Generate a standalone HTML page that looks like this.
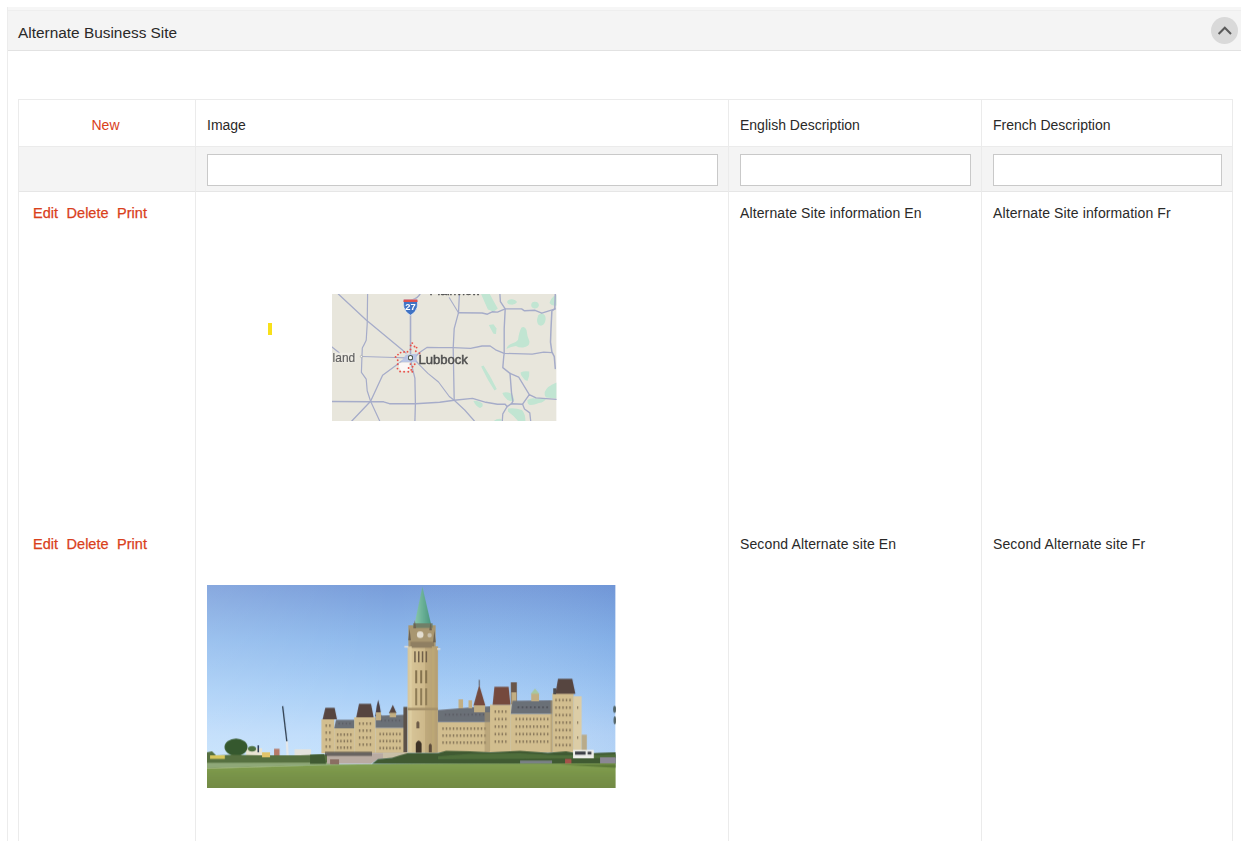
<!DOCTYPE html>
<html lang="en">
<head>
<meta charset="utf-8">
<title>Alternate Business Site</title>
<style>
html,body{margin:0;padding:0;background:#fff;}
body{width:1246px;height:847px;overflow:hidden;position:relative;font-family:"Liberation Sans",Arial,sans-serif;font-size:14px;color:#2a2928;}
.panel{position:absolute;left:7px;top:7px;width:1234px;height:834px;box-sizing:border-box;border-left:1px solid #ececec;overflow:hidden;}
.panel-top{position:absolute;left:0;top:0;width:1234px;height:3px;background:#f6f6f6;border-bottom:1px solid #eeeeee;}
.panel-head{position:absolute;left:-1px;top:4px;width:1235px;height:39px;background:#f4f4f4;border-bottom:1px solid #e2e2e2;}
.panel-title{position:absolute;left:11px;top:13px;font-size:15.4px;line-height:18px;color:#2a2928;white-space:nowrap;}
.collapse{position:absolute;left:1204px;top:5.5px;width:27px;height:27px;border-radius:50%;background:#d9d9d9;}
.collapse svg{position:absolute;left:0;top:0;}
table.grid{position:absolute;left:10px;top:92px;width:1215px;border-collapse:separate;border-spacing:0;table-layout:fixed;border-top:1px solid #ebebeb;border-left:1px solid #ebebeb;}
table.grid td,table.grid th{border-right:1px solid #ebebeb;box-sizing:border-box;padding:0 10px 0 11px;text-align:left;vertical-align:top;font-weight:normal;overflow:hidden;white-space:nowrap;}
table.grid th{height:47px;border-bottom:1px solid #ebebeb;padding-top:17px;line-height:16px;}
table.grid tr.filter td{height:45px;background:#f4f4f4;border-bottom:1px solid #e6e6e6;padding-top:7px;}
table.grid tr.filter input{display:block;width:100%;height:32px;box-sizing:border-box;border:1px solid #c9c9c9;background:#fff;margin:0;padding:0 6px;font:inherit;border-radius:0;outline:none;}
table.grid tr.data td{height:331px;padding-top:13px;line-height:16px;position:relative;}
a.cmd{color:#d9401c;text-decoration:none;}
td.cmds a.cmd{font-size:14.5px;-webkit-text-stroke:0.25px #d9401c;}
table.grid tr.data td.txt{letter-spacing:0.12px;}
.ymark{position:absolute;left:71.5px;top:130.9px;width:4.6px;height:12.3px;background:#f8e01a;filter:blur(0.5px);}
a.cmd + a.cmd{margin-left:8.6px;}
th.cmdh{text-align:center !important;padding-right:14px !important;}
.pic{position:absolute;display:block;}
</style>
</head>
<body>
<div class="panel">
  <div class="panel-top"></div>
  <div class="panel-head">
    <span class="panel-title">Alternate Business Site</span>
    <div class="collapse"><svg width="27" height="27" viewBox="0 0 27 27"><path d="M7.6 17 L13.8 10.7 L20 17" fill="none" stroke="#5a5a5a" stroke-width="2"/></svg></div>
  </div>
  <table class="grid">
    <colgroup><col style="width:177px"><col style="width:533px"><col style="width:253px"><col style="width:251px"></colgroup>
    <thead>
      <tr>
        <th class="cmdh"><a class="cmd" href="#">New</a></th>
        <th>Image</th>
        <th>English Description</th>
        <th>French Description</th>
      </tr>
    </thead>
    <tbody>
      <tr class="filter">
        <td></td>
        <td><input type="text" value=""></td>
        <td><input type="text" value=""></td>
        <td><input type="text" value=""></td>
      </tr>
      <tr class="data">
        <td class="cmds" style="padding-left:14px"><a class="cmd" href="#">Edit</a><a class="cmd" href="#">Delete</a><a class="cmd" href="#">Print</a></td>
        <td><span class="ymark"></span><svg class="pic" style="left:136.3px;top:101.9px" width="224.6" height="127" viewBox="0 0 224.6 127">
<defs><clipPath id="mclip"><rect x="0" y="0" width="224.6" height="127"/></clipPath><filter id="mblur" x="-5%" y="-5%" width="110%" height="110%"><feGaussianBlur stdDeviation="0.65"/></filter></defs>
<g clip-path="url(#mclip)">
<rect x="0" y="0" width="224.6" height="127" fill="#e8e6dc"/>
<g filter="url(#mblur)">
<path d="M149.1 0 L157.8 0 L161 6 L165.8 14.4 L161.7 17.8 L155.9 15.4 L152 6.7 Z" fill="#c1e5d2"/>
<path d="M175.1 8 Q176 5 180 5.3 Q185 6 184.8 8.5 Q183 11 179 10.6 Q175.5 10.5 175.1 8 Z" fill="#c1e5d2"/>
<path d="M199.2 11 Q199.5 7.5 203 7.7 Q207 8 206.9 11.5 Q206 14.6 202.5 14.4 Q199 14 199.2 11 Z" fill="#c1e5d2"/>
<path d="M217.5 9 Q219 3 224.6 1 L224.6 11.5 Q220 12.5 217.5 9 Z" fill="#c1e5d2"/>
<path d="M205 26 Q205.5 20 209.5 19.2 Q213.7 20 213.7 25 Q213 31 209 31.7 Q205 31.5 205 26 Z" fill="#c1e5d2"/>
<path d="M156.8 31 L161.5 30.3 L164.5 34.5 L164 40 L161.5 39.8 L158.8 35 Z" fill="#c1e5d2"/>
<path d="M186 46 Q187 38 189.5 33.5 Q193 32 194.5 36 Q195 42 197.5 47.5 Q197.5 52 193 53 Q188 54.5 184 52 Q179 52.5 174.5 55 Q175 51 180 49.5 Q184 48.5 186 46 Z" fill="#c1e5d2"/>
<path d="M149.1 72.5 L151.5 71.5 L158 82 L164.8 95 L162.5 96.6 L156 86 Z" fill="#c1e5d2"/>
<path d="M188.6 78.5 Q192 76.5 197.3 77.5 Q197.8 82 195.5 87 Q192 86 190.5 83 Q188.5 81 188.6 78.5 Z" fill="#c1e5d2"/>
<path d="M170.3 99 Q174 97.5 179 99.5 Q183 103 182 107 Q178 108 175 105.5 Q171.5 102.5 170.3 99 Z" fill="#c1e5d2"/>
<path d="M141.4 107 Q146 106 150.5 109.5 Q151.5 113 148 114 Q144 112.5 141.4 107 Z" fill="#c1e5d2"/>
<path d="M212.7 98 Q215 92 224.6 88.5 L224.6 104.5 Q218 104 214 103.5 Q212 101 212.7 98 Z" fill="#c1e5d2"/>
<path d="M195.4 106 Q199 103.5 204 104.5 L214 104.2 Q213 108 207 109 Q201 111.5 197 110.8 Q195 109 195.4 106 Z" fill="#c1e5d2"/>
<path d="M176 114.5 Q183 113.5 190 116 Q193.5 120 193.4 127 L186 127 Q181 121 176 117.5 Z" fill="#c1e5d2"/>
<path d="M161.7 127 Q165 124.3 169.4 125 L169.4 127 Z" fill="#c1e5d2"/>
<path d="M6.3 0 L34.2 26 L74 59" fill="none" stroke="#a6acc9" stroke-width="1.3" stroke-linejoin="round" stroke-linecap="round"/>
<path d="M35.6 0 L35.2 30 L34.2 46.2 Q32 51 30.3 54 L29.9 64 L29.4 78.4 L34.2 85.1 L35.2 96.7 L38.6 107.3 L47.7 127" fill="none" stroke="#a6acc9" stroke-width="1.2" stroke-linejoin="round" stroke-linecap="round"/>
<path d="M0 53 L7.2 58.8" fill="none" stroke="#a6acc9" stroke-width="1.2" stroke-linejoin="round" stroke-linecap="round"/>
<path d="M88 0 Q86 4 80 6 L78.5 10 L78.5 60" fill="none" stroke="#a6acc9" stroke-width="1.6" stroke-linejoin="round" stroke-linecap="round"/>
<path d="M84 62 L87.2 58.8 L94.9 53.5 L107.7 53.6 L121.2 53.6 L138.5 54.4 L150.1 52 L157.8 51.8 L163.6 55.8 L172.2 59.4 L200.2 60.2 L211.7 58.2 L219.9 58.7" fill="none" stroke="#a6acc9" stroke-width="1.3" stroke-linejoin="round" stroke-linecap="round"/>
<path d="M29.9 62.5 L63.1 63.5 L74 63.8" fill="none" stroke="#a6acc9" stroke-width="1.2" stroke-linejoin="round" stroke-linecap="round"/>
<path d="M70 67 L50.6 81.3 L38.6 107.3 L19.8 127" fill="none" stroke="#a6acc9" stroke-width="1.3" stroke-linejoin="round" stroke-linecap="round"/>
<path d="M0 107.5 L38.6 107.8 L51.6 107.8 L57.4 109.7 L83.4 109.7 L107.7 108.3 L122.2 106.3 L140.5 104.4 L153.9 108.3 L165.5 110.2 L173.2 110.2 L175.1 112.6 L179.5 109.7 L190.6 110.2 L197.3 100.6 L204 103.9 L224.6 105.4" fill="none" stroke="#a6acc9" stroke-width="1.4" stroke-linejoin="round" stroke-linecap="round"/>
<path d="M79 66 L79.5 70.7 L82.9 84.2 L83.4 109.7 L82.9 127" fill="none" stroke="#a6acc9" stroke-width="1.3" stroke-linejoin="round" stroke-linecap="round"/>
<path d="M84 67 L87.2 70.7 L95.9 79.4 L106.5 88 L117.3 102.5 L122.2 106.3 L132.7 116 L142.4 127" fill="none" stroke="#a6acc9" stroke-width="1.2" stroke-linejoin="round" stroke-linecap="round"/>
<path d="M127.4 0 L126.5 18.7 L122.2 34.6 L121.2 53.9 L121.7 80 L122.2 106.3" fill="none" stroke="#a6acc9" stroke-width="1.3" stroke-linejoin="round" stroke-linecap="round"/>
<path d="M117.3 3.8 L126.5 18.7" fill="none" stroke="#a6acc9" stroke-width="1.1" stroke-linejoin="round" stroke-linecap="round"/>
<path d="M126.5 18.7 L150.1 19 L155.4 20.2 L160.2 17.8 L165.5 18.1 L173.2 14.9 L189.6 14.9 L192.5 16.8 L203.1 16.3 L209.8 19.2 L223.3 14.9" fill="none" stroke="#a6acc9" stroke-width="1.4" stroke-linejoin="round" stroke-linecap="round"/>
<path d="M167.9 0 L168.4 7.7 L173.2 14.9 L172.2 34.6 L172.2 59.7 L171.8 62 L170.8 73.6 L178 79.4 L179.5 98.6 L180.9 107.3 L179.5 109.7" fill="none" stroke="#a6acc9" stroke-width="1.4" stroke-linejoin="round" stroke-linecap="round"/>
<path d="M178 79.4 L186.7 83.2 L197.3 100.6" fill="none" stroke="#a6acc9" stroke-width="1.3" stroke-linejoin="round" stroke-linecap="round"/>
<path d="M175.1 112.6 L170.8 119.8 L170.3 127" fill="none" stroke="#a6acc9" stroke-width="1.3" stroke-linejoin="round" stroke-linecap="round"/>
<path d="M190.6 110.2 L192.5 115 L197.8 118.9 L198.7 127" fill="none" stroke="#a6acc9" stroke-width="1.3" stroke-linejoin="round" stroke-linecap="round"/>
<path d="M223.3 0 L222.8 14.9 L219.9 16.8 L219 34.6 L218.5 48.1 L219.9 57.8 L222.3 62.6 L223.3 74.6" fill="none" stroke="#a6acc9" stroke-width="1.5" stroke-linejoin="round" stroke-linecap="round"/>
<path d="M68.6 68.2 L73.9 60.8 L84.6 59.7 L84.6 68.2 Z" fill="#b3bfe6" opacity="0.85"/>
<path d="M67.2 68.7 L77.6 68.7 L77.4 76.8 L69 77 L67 73 Z" fill="#fbf7f6"/>
</g>
<g fill="#ea5149" filter="url(#mblur)"><circle cx="80.3" cy="49.1" r="0.95"/><circle cx="78.7" cy="51.5" r="0.95"/><circle cx="82.5" cy="52.5" r="0.95"/><circle cx="84.6" cy="53.6" r="0.95"/><circle cx="78.5" cy="55.4" r="0.95"/><circle cx="83.8" cy="57.3" r="0.95"/><circle cx="87.5" cy="59.2" r="0.95"/><circle cx="75.5" cy="57.8" r="0.95"/><circle cx="72.1" cy="58.0" r="0.95"/><circle cx="68.6" cy="58.6" r="0.95"/><circle cx="66.0" cy="60.6" r="0.95"/><circle cx="63.6" cy="62.9" r="0.95"/><circle cx="65.7" cy="66.3" r="0.95"/><circle cx="65.7" cy="70.3" r="0.95"/><circle cx="65.5" cy="74.6" r="0.95"/><circle cx="68.1" cy="77.5" r="0.95"/><circle cx="72.1" cy="77.8" r="0.95"/><circle cx="76.3" cy="77.8" r="0.95"/><circle cx="80.3" cy="77.8" r="0.95"/><circle cx="76.6" cy="74.0" r="0.95"/><circle cx="78.5" cy="70.1" r="0.95"/><circle cx="82.7" cy="70.3" r="0.95"/><circle cx="79.3" cy="75.9" r="0.95"/><circle cx="80.6" cy="72.8" r="0.95"/></g>
<circle cx="78.5" cy="63.7" r="2.2" fill="#fff" stroke="#4f5a50" stroke-width="1.2" filter="url(#mblur)"/>
<circle cx="29.4" cy="62.5" r="1.1" fill="#f4f4f0" stroke="#999" stroke-width="0.5"/>
<g filter="url(#mblur)">
<path d="M71.6 5.4 L85.4 5.4 L85.6 8 Q86 14 83 17.5 Q81 20 78.5 21.2 Q76 20 74 17.5 Q71 14 71.4 8 Z" fill="#3f73c4" stroke="#fff" stroke-width="0.6"/>
<path d="M71.6 5.4 L85.4 5.4 L85.55 7.9 L71.45 7.9 Z" fill="#e0514c"/>
</g>
<text x="78.5" y="16.3" text-anchor="middle" filter="url(#mblur)" font-family="Liberation Sans, Arial, sans-serif" font-weight="bold" font-size="8.4" fill="#fff" textLength="10.4" lengthAdjust="spacingAndGlyphs">27</text>
<g filter="url(#mblur)" font-family="Liberation Sans, Arial, sans-serif">
<text x="86.4" y="69.8" font-size="12.6" fill="#505050" stroke="#505050" stroke-width="0.45" textLength="49.5" lengthAdjust="spacingAndGlyphs">Lubbock</text>
<rect x="0" y="58.6" width="24" height="10" fill="#efede6" opacity="0.7"/><text x="0.6" y="67.6" font-size="12" fill="#606060" stroke="#606060" stroke-width="0.15" textLength="22.6" lengthAdjust="spacingAndGlyphs">land</text>
<text x="97.5" y="1.0" font-size="12.6" fill="#505050" stroke="#505050" stroke-width="0.45" textLength="51" lengthAdjust="spacingAndGlyphs">Plainview</text>
</g>
</g></svg></td>
        <td class="txt">Alternate Site information En</td>
        <td class="txt">Alternate Site information Fr</td>
      </tr>
      <tr class="data">
        <td class="cmds" style="padding-left:14px"><a class="cmd" href="#">Edit</a><a class="cmd" href="#">Delete</a><a class="cmd" href="#">Print</a></td>
        <td><svg class="pic" style="left:11px;top:61.7px" width="408.6" height="203.1" viewBox="207.0 584.7 408.6 203.1">
<defs><linearGradient id="sky" x1="0" y1="0" x2="0" y2="1"><stop offset="0" stop-color="#789dda"/><stop offset="0.3" stop-color="#8eb9ec"/><stop offset="0.58" stop-color="#a6cdf6"/><stop offset="0.83" stop-color="#bedcfb"/><stop offset="1" stop-color="#c5e2fc"/></linearGradient><linearGradient id="skyh" x1="0" y1="0" x2="1" y2="0"><stop offset="0" stop-color="#fff" stop-opacity="0.12"/><stop offset="0.45" stop-color="#fff" stop-opacity="0"/><stop offset="1" stop-color="#2858b8" stop-opacity="0.10"/></linearGradient><linearGradient id="lawn" x1="0" y1="0" x2="0" y2="1"><stop offset="0" stop-color="#82a052"/><stop offset="0.4" stop-color="#7a9549"/><stop offset="1" stop-color="#728a44"/></linearGradient><linearGradient id="spire" x1="0" y1="0" x2="1" y2="0"><stop offset="0" stop-color="#8cc9ae"/><stop offset="0.5" stop-color="#69b096"/><stop offset="1" stop-color="#4a957c"/></linearGradient><linearGradient id="shaft" x1="0" y1="0" x2="1" y2="0"><stop offset="0" stop-color="#d9c79a"/><stop offset="0.6" stop-color="#cdb88a"/><stop offset="1" stop-color="#b9a377"/></linearGradient><clipPath id="pclip"><rect x="207.0" y="584.7" width="408.6" height="203.1"/></clipPath><filter id="pblur" x="-2%" y="-2%" width="104%" height="104%"><feGaussianBlur stdDeviation="0.5"/></filter></defs>
<g clip-path="url(#pclip)">
<rect x="207.0" y="584.7" width="408.6" height="181.3" fill="url(#sky)"/>
<rect x="207.0" y="584.7" width="408.6" height="181.3" fill="url(#skyh)"/>
<g filter="url(#pblur)">
<rect x="294.5" y="749.0" width="16.5" height="6.0" fill="#e4e3dc"/>
<rect x="274.0" y="748.5" width="5.5" height="7.0" fill="#b57a68"/>
<rect x="246.0" y="748.0" width="16.0" height="8.0" fill="#e9e4d4"/>
<ellipse cx="236" cy="746.8" rx="11.5" ry="8.6" fill="#36592e"/>
<ellipse cx="252" cy="748.5" rx="4" ry="2.8" fill="#4d7040"/>
<line x1="282.6" y1="705.9" x2="286.8" y2="741" stroke="#2f3e4e" stroke-width="1.3"/>
<line x1="286.8" y1="741" x2="287.5" y2="755" stroke="#e4e6e8" stroke-width="2.2"/>
<rect x="257.5" y="745.0" width="1.5" height="7.0" fill="#2a3a55"/>
<polygon points="207.0,752.0 212.0,751.0 216.0,755.0 232.0,754.5 260.0,755.0 300.0,755.0 330.0,754.0 330.0,764.0 207.0,764.0" fill="#56703f"/>
<rect x="210.0" y="755.0" width="14.8" height="3.6" fill="#d8c65c"/>
<rect x="262.0" y="752.0" width="8.0" height="5.0" fill="#e2c46a"/>
<polygon points="207.0,762.5 330.0,762.2 330.0,764.5 207.0,768.2" fill="#8fa878"/>
<rect x="321.4" y="719.0" width="12.8" height="34.0" fill="#d2be8f"/>
<polygon points="322.6,719.0 325.3,707.4 334.6,707.4 337.0,719.0" fill="#574541"/>
<rect x="334.2" y="728.0" width="20.0" height="25.0" fill="#d2be8f"/>
<polygon points="334.2,728.0 336.0,719.5 354.2,719.5 354.2,728.0" fill="#6b6f77"/>
<rect x="354.2" y="717.0" width="21.4" height="36.0" fill="#d2be8f"/>
<polygon points="356.2,717.0 359.0,703.4 371.0,703.4 373.6,717.0" fill="#574541"/>
<rect x="375.6" y="727.4" width="31.4" height="25.6" fill="#d2be8f"/>
<polygon points="375.6,727.4 375.6,715.4 404.0,714.6 404.0,727.4" fill="#6b6f77"/>
<polygon points="375.2,716.0 376.6,706.0 378.2,699.4 379.8,706.0 381.4,716.0" fill="#4b4044"/>
<rect x="376.0" y="712.0" width="5.0" height="8.0" fill="#c2ae82"/>
<polygon points="388.8,713.0 392.8,704.6 396.6,713.0" fill="#574541"/>
<rect x="389.6" y="712.5" width="6.4" height="4.5" fill="#c2ae82"/>
<rect x="403.4" y="706.6" width="4.0" height="45.4" fill="#5b5148"/>
<g fill="#7a6a50" opacity="0.85"><rect x="325.5" y="724.0" width="1.4" height="2.6"/><rect x="329.1" y="724.0" width="1.4" height="2.6"/><rect x="325.5" y="731.0" width="1.4" height="2.6"/><rect x="329.1" y="731.0" width="1.4" height="2.6"/><rect x="325.5" y="738.0" width="1.4" height="2.6"/><rect x="329.1" y="738.0" width="1.4" height="2.6"/><rect x="325.5" y="745.0" width="1.4" height="2.6"/><rect x="329.1" y="745.0" width="1.4" height="2.6"/></g>
<g fill="#7a6a50" opacity="0.85"><rect x="336.9" y="733.0" width="1.4" height="2.6"/><rect x="340.2" y="733.0" width="1.4" height="2.6"/><rect x="343.6" y="733.0" width="1.4" height="2.6"/><rect x="346.8" y="733.0" width="1.4" height="2.6"/><rect x="350.1" y="733.0" width="1.4" height="2.6"/><rect x="336.9" y="739.5" width="1.4" height="2.6"/><rect x="340.2" y="739.5" width="1.4" height="2.6"/><rect x="343.6" y="739.5" width="1.4" height="2.6"/><rect x="346.8" y="739.5" width="1.4" height="2.6"/><rect x="350.1" y="739.5" width="1.4" height="2.6"/><rect x="336.9" y="746.0" width="1.4" height="2.6"/><rect x="340.2" y="746.0" width="1.4" height="2.6"/><rect x="343.6" y="746.0" width="1.4" height="2.6"/><rect x="346.8" y="746.0" width="1.4" height="2.6"/><rect x="350.1" y="746.0" width="1.4" height="2.6"/></g>
<g fill="#7a6a50" opacity="0.85"><rect x="358.9" y="722.0" width="1.4" height="2.6"/><rect x="362.5" y="722.0" width="1.4" height="2.6"/><rect x="366.1" y="722.0" width="1.4" height="2.6"/><rect x="369.7" y="722.0" width="1.4" height="2.6"/><rect x="358.9" y="729.0" width="1.4" height="2.6"/><rect x="362.5" y="729.0" width="1.4" height="2.6"/><rect x="366.1" y="729.0" width="1.4" height="2.6"/><rect x="369.7" y="729.0" width="1.4" height="2.6"/><rect x="358.9" y="736.0" width="1.4" height="2.6"/><rect x="362.5" y="736.0" width="1.4" height="2.6"/><rect x="366.1" y="736.0" width="1.4" height="2.6"/><rect x="369.7" y="736.0" width="1.4" height="2.6"/><rect x="358.9" y="743.0" width="1.4" height="2.6"/><rect x="362.5" y="743.0" width="1.4" height="2.6"/><rect x="366.1" y="743.0" width="1.4" height="2.6"/><rect x="369.7" y="743.0" width="1.4" height="2.6"/></g>
<g fill="#7a6a50" opacity="0.85"><rect x="379.4" y="732.5" width="1.4" height="2.6"/><rect x="382.7" y="732.5" width="1.4" height="2.6"/><rect x="386.0" y="732.5" width="1.4" height="2.6"/><rect x="389.3" y="732.5" width="1.4" height="2.6"/><rect x="392.6" y="732.5" width="1.4" height="2.6"/><rect x="395.9" y="732.5" width="1.4" height="2.6"/><rect x="399.2" y="732.5" width="1.4" height="2.6"/><rect x="379.4" y="739.5" width="1.4" height="2.6"/><rect x="382.7" y="739.5" width="1.4" height="2.6"/><rect x="386.0" y="739.5" width="1.4" height="2.6"/><rect x="389.3" y="739.5" width="1.4" height="2.6"/><rect x="392.6" y="739.5" width="1.4" height="2.6"/><rect x="395.9" y="739.5" width="1.4" height="2.6"/><rect x="399.2" y="739.5" width="1.4" height="2.6"/><rect x="379.4" y="746.5" width="1.4" height="2.6"/><rect x="382.7" y="746.5" width="1.4" height="2.6"/><rect x="386.0" y="746.5" width="1.4" height="2.6"/><rect x="389.3" y="746.5" width="1.4" height="2.6"/><rect x="392.6" y="746.5" width="1.4" height="2.6"/><rect x="395.9" y="746.5" width="1.4" height="2.6"/><rect x="399.2" y="746.5" width="1.4" height="2.6"/></g>
<g fill="#55585e" opacity="0.85"><rect x="338.5" y="722.5" width="1.2" height="1.6"/><rect x="342.1" y="722.5" width="1.2" height="1.6"/><rect x="345.7" y="722.5" width="1.2" height="1.6"/><rect x="349.3" y="722.5" width="1.2" height="1.6"/></g>
<g fill="#55585e" opacity="0.85"><rect x="380.9" y="719.5" width="1.2" height="1.6"/><rect x="384.5" y="719.5" width="1.2" height="1.6"/><rect x="388.1" y="719.5" width="1.2" height="1.6"/><rect x="391.7" y="719.5" width="1.2" height="1.6"/><rect x="395.3" y="719.5" width="1.2" height="1.6"/><rect x="398.9" y="719.5" width="1.2" height="1.6"/></g>
<rect x="437.8" y="721.8" width="52.2" height="30.6" fill="#d2be8f"/>
<polygon points="437.8,721.8 437.8,709.8 472.0,707.0 490.0,706.0 490.0,721.8" fill="#6b6f77"/>
<rect x="458.5" y="699.0" width="4.5" height="9.0" fill="#c2ae82"/>
<rect x="468.5" y="700.0" width="3.5" height="8.0" fill="#c2ae82"/>
<polygon points="473.4,705.5 479.2,684.6 485.4,705.5" fill="#754a3d"/>
<line x1="479.2" y1="679.6" x2="479.2" y2="685.5" stroke="#4a3d3c" stroke-width="0.8"/>
<rect x="474.0" y="705.0" width="11.0" height="7.0" fill="#c2ae82"/>
<rect x="490.0" y="704.4" width="20.8" height="48.0" fill="#d2be8f"/>
<polygon points="492.6,704.4 494.4,686.4 508.6,686.4 510.4,704.4" fill="#754a3d"/>
<rect x="510.8" y="682.0" width="6.0" height="22.0" fill="#6a564a"/>
<rect x="511.4" y="692.0" width="5.0" height="20.0" fill="#c2ae82"/>
<rect x="510.8" y="713.6" width="41.6" height="38.8" fill="#d2be8f"/>
<polygon points="510.8,713.6 512.5,700.4 552.4,700.0 552.4,713.6" fill="#6b6f77"/>
<rect x="531.2" y="693.0" width="7.8" height="8.0" fill="#c2ae82"/>
<polygon points="530.8,693.4 535.0,688.2 539.4,693.4" fill="#a7c7a0"/>
<rect x="552.4" y="693.0" width="21.2" height="59.4" fill="#d2be8f"/>
<rect x="573.6" y="696.0" width="8.0" height="56.4" fill="#dccda6"/>
<polygon points="555.4,693.6 558.0,678.4 572.2,678.4 575.4,693.6" fill="#574541"/>
<rect x="553.2" y="688.0" width="2.8" height="6.0" fill="#4d4a4c"/>
<rect x="581.6" y="734.4" width="5.2" height="16.6" fill="#b9ab8a"/>
<g fill="#7a6a50" opacity="0.85"><rect x="442.3" y="727.0" width="1.4" height="2.6"/><rect x="445.8" y="727.0" width="1.4" height="2.6"/><rect x="449.3" y="727.0" width="1.4" height="2.6"/><rect x="452.8" y="727.0" width="1.4" height="2.6"/><rect x="456.3" y="727.0" width="1.4" height="2.6"/><rect x="459.8" y="727.0" width="1.4" height="2.6"/><rect x="463.3" y="727.0" width="1.4" height="2.6"/><rect x="466.8" y="727.0" width="1.4" height="2.6"/><rect x="470.3" y="727.0" width="1.4" height="2.6"/><rect x="473.8" y="727.0" width="1.4" height="2.6"/><rect x="477.3" y="727.0" width="1.4" height="2.6"/><rect x="480.8" y="727.0" width="1.4" height="2.6"/><rect x="484.3" y="727.0" width="1.4" height="2.6"/><rect x="442.3" y="734.0" width="1.4" height="2.6"/><rect x="445.8" y="734.0" width="1.4" height="2.6"/><rect x="449.3" y="734.0" width="1.4" height="2.6"/><rect x="452.8" y="734.0" width="1.4" height="2.6"/><rect x="456.3" y="734.0" width="1.4" height="2.6"/><rect x="459.8" y="734.0" width="1.4" height="2.6"/><rect x="463.3" y="734.0" width="1.4" height="2.6"/><rect x="466.8" y="734.0" width="1.4" height="2.6"/><rect x="470.3" y="734.0" width="1.4" height="2.6"/><rect x="473.8" y="734.0" width="1.4" height="2.6"/><rect x="477.3" y="734.0" width="1.4" height="2.6"/><rect x="480.8" y="734.0" width="1.4" height="2.6"/><rect x="484.3" y="734.0" width="1.4" height="2.6"/><rect x="442.3" y="741.0" width="1.4" height="2.6"/><rect x="445.8" y="741.0" width="1.4" height="2.6"/><rect x="449.3" y="741.0" width="1.4" height="2.6"/><rect x="452.8" y="741.0" width="1.4" height="2.6"/><rect x="456.3" y="741.0" width="1.4" height="2.6"/><rect x="459.8" y="741.0" width="1.4" height="2.6"/><rect x="463.3" y="741.0" width="1.4" height="2.6"/><rect x="466.8" y="741.0" width="1.4" height="2.6"/><rect x="470.3" y="741.0" width="1.4" height="2.6"/><rect x="473.8" y="741.0" width="1.4" height="2.6"/><rect x="477.3" y="741.0" width="1.4" height="2.6"/><rect x="480.8" y="741.0" width="1.4" height="2.6"/><rect x="484.3" y="741.0" width="1.4" height="2.6"/></g>
<g fill="#55585e" opacity="0.85"><rect x="444.9" y="713.5" width="1.3" height="1.7"/><rect x="448.7" y="713.5" width="1.3" height="1.7"/><rect x="452.5" y="713.5" width="1.3" height="1.7"/><rect x="456.2" y="713.5" width="1.3" height="1.7"/><rect x="460.1" y="713.5" width="1.3" height="1.7"/><rect x="463.9" y="713.5" width="1.3" height="1.7"/><rect x="467.7" y="713.5" width="1.3" height="1.7"/><rect x="471.5" y="713.5" width="1.3" height="1.7"/><rect x="475.2" y="713.5" width="1.3" height="1.7"/><rect x="479.1" y="713.5" width="1.3" height="1.7"/><rect x="482.9" y="713.5" width="1.3" height="1.7"/></g>
<g fill="#7a6a50" opacity="0.85"><rect x="494.6" y="710.0" width="1.4" height="2.6"/><rect x="498.1" y="710.0" width="1.4" height="2.6"/><rect x="501.6" y="710.0" width="1.4" height="2.6"/><rect x="505.1" y="710.0" width="1.4" height="2.6"/><rect x="494.6" y="717.5" width="1.4" height="2.6"/><rect x="498.1" y="717.5" width="1.4" height="2.6"/><rect x="501.6" y="717.5" width="1.4" height="2.6"/><rect x="505.1" y="717.5" width="1.4" height="2.6"/><rect x="494.6" y="725.0" width="1.4" height="2.6"/><rect x="498.1" y="725.0" width="1.4" height="2.6"/><rect x="501.6" y="725.0" width="1.4" height="2.6"/><rect x="505.1" y="725.0" width="1.4" height="2.6"/><rect x="494.6" y="732.5" width="1.4" height="2.6"/><rect x="498.1" y="732.5" width="1.4" height="2.6"/><rect x="501.6" y="732.5" width="1.4" height="2.6"/><rect x="505.1" y="732.5" width="1.4" height="2.6"/><rect x="494.6" y="740.0" width="1.4" height="2.6"/><rect x="498.1" y="740.0" width="1.4" height="2.6"/><rect x="501.6" y="740.0" width="1.4" height="2.6"/><rect x="505.1" y="740.0" width="1.4" height="2.6"/></g>
<g fill="#7a6a50" opacity="0.85"><rect x="515.5" y="717.5" width="1.4" height="2.6"/><rect x="519.0" y="717.5" width="1.4" height="2.6"/><rect x="522.5" y="717.5" width="1.4" height="2.6"/><rect x="526.0" y="717.5" width="1.4" height="2.6"/><rect x="529.5" y="717.5" width="1.4" height="2.6"/><rect x="533.0" y="717.5" width="1.4" height="2.6"/><rect x="536.5" y="717.5" width="1.4" height="2.6"/><rect x="540.0" y="717.5" width="1.4" height="2.6"/><rect x="543.5" y="717.5" width="1.4" height="2.6"/><rect x="547.0" y="717.5" width="1.4" height="2.6"/><rect x="515.5" y="725.0" width="1.4" height="2.6"/><rect x="519.0" y="725.0" width="1.4" height="2.6"/><rect x="522.5" y="725.0" width="1.4" height="2.6"/><rect x="526.0" y="725.0" width="1.4" height="2.6"/><rect x="529.5" y="725.0" width="1.4" height="2.6"/><rect x="533.0" y="725.0" width="1.4" height="2.6"/><rect x="536.5" y="725.0" width="1.4" height="2.6"/><rect x="540.0" y="725.0" width="1.4" height="2.6"/><rect x="543.5" y="725.0" width="1.4" height="2.6"/><rect x="547.0" y="725.0" width="1.4" height="2.6"/><rect x="515.5" y="732.5" width="1.4" height="2.6"/><rect x="519.0" y="732.5" width="1.4" height="2.6"/><rect x="522.5" y="732.5" width="1.4" height="2.6"/><rect x="526.0" y="732.5" width="1.4" height="2.6"/><rect x="529.5" y="732.5" width="1.4" height="2.6"/><rect x="533.0" y="732.5" width="1.4" height="2.6"/><rect x="536.5" y="732.5" width="1.4" height="2.6"/><rect x="540.0" y="732.5" width="1.4" height="2.6"/><rect x="543.5" y="732.5" width="1.4" height="2.6"/><rect x="547.0" y="732.5" width="1.4" height="2.6"/><rect x="515.5" y="740.0" width="1.4" height="2.6"/><rect x="519.0" y="740.0" width="1.4" height="2.6"/><rect x="522.5" y="740.0" width="1.4" height="2.6"/><rect x="526.0" y="740.0" width="1.4" height="2.6"/><rect x="529.5" y="740.0" width="1.4" height="2.6"/><rect x="533.0" y="740.0" width="1.4" height="2.6"/><rect x="536.5" y="740.0" width="1.4" height="2.6"/><rect x="540.0" y="740.0" width="1.4" height="2.6"/><rect x="543.5" y="740.0" width="1.4" height="2.6"/><rect x="547.0" y="740.0" width="1.4" height="2.6"/></g>
<g fill="#4c4f56" opacity="0.85"><rect x="517.6" y="706.0" width="1.6" height="2.0"/><rect x="521.7" y="706.0" width="1.6" height="2.0"/><rect x="525.8" y="706.0" width="1.6" height="2.0"/><rect x="529.9" y="706.0" width="1.6" height="2.0"/><rect x="534.0" y="706.0" width="1.6" height="2.0"/><rect x="538.1" y="706.0" width="1.6" height="2.0"/><rect x="542.2" y="706.0" width="1.6" height="2.0"/><rect x="546.3" y="706.0" width="1.6" height="2.0"/></g>
<g fill="#7a6a50" opacity="0.85"><rect x="555.3" y="698.5" width="1.4" height="2.6"/><rect x="558.8" y="698.5" width="1.4" height="2.6"/><rect x="562.3" y="698.5" width="1.4" height="2.6"/><rect x="565.8" y="698.5" width="1.4" height="2.6"/><rect x="569.3" y="698.5" width="1.4" height="2.6"/><rect x="555.3" y="706.0" width="1.4" height="2.6"/><rect x="558.8" y="706.0" width="1.4" height="2.6"/><rect x="562.3" y="706.0" width="1.4" height="2.6"/><rect x="565.8" y="706.0" width="1.4" height="2.6"/><rect x="569.3" y="706.0" width="1.4" height="2.6"/><rect x="555.3" y="713.5" width="1.4" height="2.6"/><rect x="558.8" y="713.5" width="1.4" height="2.6"/><rect x="562.3" y="713.5" width="1.4" height="2.6"/><rect x="565.8" y="713.5" width="1.4" height="2.6"/><rect x="569.3" y="713.5" width="1.4" height="2.6"/><rect x="555.3" y="721.0" width="1.4" height="2.6"/><rect x="558.8" y="721.0" width="1.4" height="2.6"/><rect x="562.3" y="721.0" width="1.4" height="2.6"/><rect x="565.8" y="721.0" width="1.4" height="2.6"/><rect x="569.3" y="721.0" width="1.4" height="2.6"/><rect x="555.3" y="728.5" width="1.4" height="2.6"/><rect x="558.8" y="728.5" width="1.4" height="2.6"/><rect x="562.3" y="728.5" width="1.4" height="2.6"/><rect x="565.8" y="728.5" width="1.4" height="2.6"/><rect x="569.3" y="728.5" width="1.4" height="2.6"/><rect x="555.3" y="736.0" width="1.4" height="2.6"/><rect x="558.8" y="736.0" width="1.4" height="2.6"/><rect x="562.3" y="736.0" width="1.4" height="2.6"/><rect x="565.8" y="736.0" width="1.4" height="2.6"/><rect x="569.3" y="736.0" width="1.4" height="2.6"/><rect x="555.3" y="743.5" width="1.4" height="2.6"/><rect x="558.8" y="743.5" width="1.4" height="2.6"/><rect x="562.3" y="743.5" width="1.4" height="2.6"/><rect x="565.8" y="743.5" width="1.4" height="2.6"/><rect x="569.3" y="743.5" width="1.4" height="2.6"/></g>
<g fill="#7a6a50" opacity="0.85"><rect x="577.1" y="706.0" width="1.1" height="2.6"/><rect x="577.1" y="721.0" width="1.1" height="2.6"/><rect x="577.1" y="736.0" width="1.1" height="2.6"/></g>
<rect x="484.6" y="712.0" width="5.4" height="40.0" fill="#a8946c" opacity="0.55"/>
<rect x="550.6" y="700.0" width="2.0" height="52.0" fill="#a8946c" opacity="0.6"/>
<rect x="407.6" y="646.0" width="30.2" height="106.6" fill="url(#shaft)"/>
<rect x="425.0" y="646.0" width="12.8" height="106.6" fill="#b39d70" opacity="0.55"/>
<rect x="408.4" y="625.0" width="27.2" height="21.6" fill="#a8966f"/>
<rect x="410.5" y="641.5" width="23.5" height="6.0" fill="#8f7f62"/>
<polygon points="414.2,625.6 422.4,586.4 431.4,625.6" fill="url(#spire)"/>
<rect x="413.2" y="623.0" width="19.4" height="4.6" fill="#6f7f68"/>
<polygon points="408.3,640.0 409.6,628.0 410.9,640.0" fill="#6e6352"/>
<polygon points="433.1,642.0 434.4,630.0 435.7,642.0" fill="#6e6352"/>
<polygon points="413.5,628.0 414.8,620.0 416.1,628.0" fill="#6e6352"/>
<polygon points="429.3,630.0 430.6,622.0 431.9,630.0" fill="#6e6352"/>
<circle cx="420.2" cy="634.4" r="3.3" fill="#e4ded0"/>
<circle cx="429.6" cy="635" r="2.2" fill="#c9c0ac"/>
<rect x="404.4" y="645.8" width="4.0" height="1.4" fill="#e6e2d8"/>
<rect x="437.0" y="648.0" width="3.4" height="1.4" fill="#e6e2d8"/>
<rect x="414.2" y="651.0" width="1.5" height="11.0" fill="#6f5f48"/>
<rect x="418.0" y="651.0" width="1.5" height="11.0" fill="#6f5f48"/>
<rect x="421.8" y="651.0" width="1.5" height="11.0" fill="#6f5f48"/>
<rect x="425.6" y="651.0" width="1.5" height="11.0" fill="#6f5f48"/>
<rect x="415.2" y="670.0" width="2.0" height="13.0" fill="#85734f"/>
<rect x="415.2" y="688.0" width="2.0" height="17.0" fill="#8e7b56"/>
<rect x="420.2" y="670.0" width="2.0" height="13.0" fill="#85734f"/>
<rect x="420.2" y="688.0" width="2.0" height="17.0" fill="#8e7b56"/>
<rect x="425.2" y="670.0" width="2.0" height="13.0" fill="#85734f"/>
<rect x="425.2" y="688.0" width="2.0" height="17.0" fill="#8e7b56"/>
<rect x="409.4" y="646.0" width="2.4" height="106.0" fill="#dfcfa4" opacity="0.8"/>
<rect x="431.8" y="646.0" width="2.8" height="106.0" fill="#bda876" opacity="0.8"/>
<rect x="407.6" y="707.5" width="30.2" height="2.5" fill="#a5916a"/>
<path d="M416.4 728 L416.4 722.5 Q417.9 719.6 419.4 722.5 L419.4 728 Z" fill="#6d5c48"/>
<path d="M415.8 752.6 L415.8 743 Q418.6 737.4 421.6 743 L421.6 752.6 Z" fill="#3d3228"/>
<path d="M428.8 752 L428.8 745 Q430.3 741.4 431.8 745 L431.8 752 Z" fill="#5d4c3a"/>
<polygon points="327.0,752.4 408.0,752.4 408.0,756.2 392.0,757.6 378.0,759.0 371.0,763.4 327.0,763.4" fill="#b9aba2"/>
<polygon points="383.0,752.4 408.0,752.4 408.0,756.4 392.0,757.8 383.0,758.6" fill="#c9bfa6"/>
<rect x="325.0" y="751.4" width="47.0" height="4.2" fill="#4e4b4a" opacity="0.75"/>
<rect x="330.0" y="759.0" width="9.0" height="5.0" fill="#8a6e62"/>
<polygon points="310.0,754.5 324.0,754.0 326.0,763.4 310.0,763.4" fill="#3f5a32"/>
<path d="M372 763.6 L378 758.8 L392 757.4 L400 755 L408 752.8 L438 752.8 L446 750.4 L470 751 L490 752 L520 750.6 L548 752.6 L566 751 L580 753.4 L600 752.4 L615.6 752 L615.6 764 Z" fill="#3f5a32"/>
<path d="M438 756 L470 753.4 L520 753 L560 755 L600 754.6 L615.6 754 L615.6 758 L438 759 Z" fill="#4f6e3b"/>
<rect x="573.0" y="749.6" width="20.8" height="8.4" fill="#eeeeea"/>
<rect x="575.0" y="751.2" width="10.6" height="3.2" fill="#3a3d44"/>
<rect x="587.6" y="751.4" width="3.8" height="2.8" fill="#3a3d44"/>
<rect x="600.0" y="757.0" width="15.6" height="6.0" fill="#8b8794"/>
<rect x="565.0" y="758.6" width="6.4" height="5.0" fill="#a5524a"/>
<rect x="520.0" y="760.2" width="32.0" height="3.0" fill="#7a8186"/>
<ellipse cx="614.6" cy="709" rx="1.5" ry="3.6" fill="#3d4a44" opacity="0.8"/><ellipse cx="614.8" cy="720" rx="1.3" ry="4" fill="#3d4a44" opacity="0.8"/>
<polygon points="207.0,768.0 330.0,764.2 420.0,763.4 615.6,763.2 615.6,788.0 207.0,788.0" fill="url(#lawn)"/>
<polygon points="560.0,764.4 615.6,764.2 615.6,767.6" fill="#5d7a38"/>
</g>
</g></svg></td>
        <td class="txt">Second Alternate site En</td>
        <td class="txt">Second Alternate site Fr</td>
      </tr>
    </tbody>
  </table>
</div>
</body>
</html>
